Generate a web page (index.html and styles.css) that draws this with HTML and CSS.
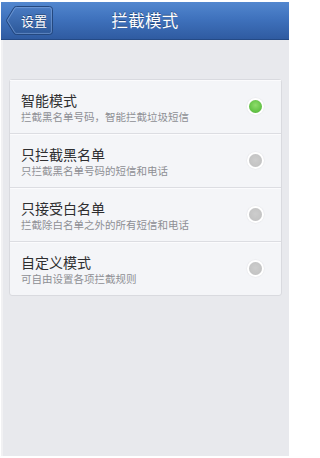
FILE: index.html
```html
<!DOCTYPE html>
<html lang="zh">
<head>
<meta charset="utf-8">
<title>拦截模式</title>
<link rel="stylesheet" href="styles.css">
</head>
<body>
<div class="screen">
  <header class="nav">
    <div class="back">
      <svg class="back-bg" width="49" height="31" viewBox="0 0 49 31">
        <defs>
          <linearGradient id="bg" x1="0" y1="0" x2="0" y2="1">
            <stop offset="0" stop-color="#4a7cc4"/>
            <stop offset="1" stop-color="#2c5798"/>
          </linearGradient>
        </defs>
        <path d="M11.5 1.5 H44.5 Q47.5 1.5 47.5 4.5 V26.5 Q47.5 29.5 44.5 29.5 H11.5 Q10 29.5 9 28.5 L1.8 16.6 Q1.2 15.5 1.8 14.4 L9 2.5 Q10 1.5 11.5 1.5 Z" fill="url(#bg)" stroke="#24487f" stroke-width="1"/>
        <path d="M11.5 2.6 H44.5 Q46.4 2.6 46.4 4.5 V26.5 Q46.4 28.4 44.5 28.4 H11.5 Q10.5 28.4 9.9 27.7 L2.9 16.2 Q2.5 15.5 2.9 14.8 L9.9 3.3 Q10.5 2.6 11.5 2.6 Z" fill="none" stroke="#8aaee2" stroke-opacity="0.7" stroke-width="0.8"/>
      </svg>
      <span class="back-text">设置</span>
    </div>
    <h1 class="title">拦截模式</h1>
  </header>
  <main class="content">
    <ul class="list">
      <li class="row">
        <div class="texts">
          <div class="name">智能模式</div>
          <div class="desc">拦截黑名单号码，智能拦截垃圾短信</div>
        </div>
        <span class="radio on"></span>
      </li>
      <li class="row">
        <div class="texts">
          <div class="name">只拦截黑名单</div>
          <div class="desc">只拦截黑名单号码的短信和电话</div>
        </div>
        <span class="radio"></span>
      </li>
      <li class="row">
        <div class="texts">
          <div class="name">只接受白名单</div>
          <div class="desc">拦截除白名单之外的所有短信和电话</div>
        </div>
        <span class="radio"></span>
      </li>
      <li class="row">
        <div class="texts">
          <div class="name">自定义模式</div>
          <div class="desc">可自由设置各项拦截规则</div>
        </div>
        <span class="radio"></span>
      </li>
    </ul>
  </main>
</div>
</body>
</html>
```

FILE: styles.css
```css
html, body {
  margin: 0;
  padding: 0;
  background: #ffffff;
}
body {
  font-family: "Noto Sans CJK SC", "Noto Sans", sans-serif;
  width: 291px;
  height: 458px;
  overflow: hidden;
}
.screen {
  margin: 2px 2px 0 1px;
  height: 454px;
  background: #e8e9ed;
  border-left: 2px solid #f1f1f3;
  box-sizing: border-box;
  display: flex;
  flex-direction: column;
}
.nav {
  height: 38px;
  margin-left: -2px;
  flex: 0 0 auto;
  background: linear-gradient(#5287cf 0%, #3f72bd 45%, #2f5ba1 100%);
  border-bottom: 1px solid #244a86;
  box-sizing: border-box;
  display: flex;
  align-items: center;
  position: relative;
}
.back {
  position: relative;
  width: 49px;
  height: 31px;
  margin-left: 4px;
  flex: 0 0 auto;
}
.back-bg {
  display: block;
}
.back-text {
  position: absolute;
  left: 16px;
  top: 0;
  height: 31px;
  line-height: 31px;
  font-size: 13px;
  color: #ffffff;
  text-shadow: 0 -1px 0 rgba(0, 0, 0, 0.35);
}
.title {
  position: absolute;
  left: 0;
  right: 0;
  top: 0;
  margin: 0;
  text-align: center;
  line-height: 37px;
  font-size: 16.5px;
  font-weight: normal;
  color: #ffffff;
  text-shadow: 0 -1px 0 rgba(0, 0, 0, 0.35);
  letter-spacing: 0.3px;
  pointer-events: none;
}
.content {
  padding: 39px 7px 0 6px;
}
.list {
  list-style: none;
  margin: 0;
  padding: 0;
  background: #f4f5f8;
  border: 1px solid #d9dadf;
  border-radius: 3px;
}
.row {
  height: 53px;
  display: flex;
  align-items: center;
  padding: 0 19px 0 11px;
  border-top: 1px solid #dcdde2;
  box-shadow: inset 0 1px 0 #fbfbfd;
}
.row:first-child {
  border-top: none;
}
.texts {
  flex: 1 1 auto;
  margin-top: 2px;
}
.name {
  font-size: 14px;
  line-height: 18px;
  color: #2e2e30;
}
.desc {
  font-size: 10.5px;
  line-height: 15px;
  color: #8e8f94;
}
.radio {
  flex: 0 0 auto;
  width: 13px;
  height: 13px;
  border-radius: 50%;
  background: radial-gradient(circle at 50% 45%, #cdcdcd 0%, #c3c3c3 70%, #bbbbbb 100%);
  box-shadow: 0 0 0 2px #ffffff, 0 0 1px 2.5px rgba(220, 220, 225, 0.6);
  margin-top: -1px;
}
.radio.on {
  background: radial-gradient(circle at 50% 40%, #8fdc6c 0%, #68c64a 55%, #4fae35 100%);
}
```
